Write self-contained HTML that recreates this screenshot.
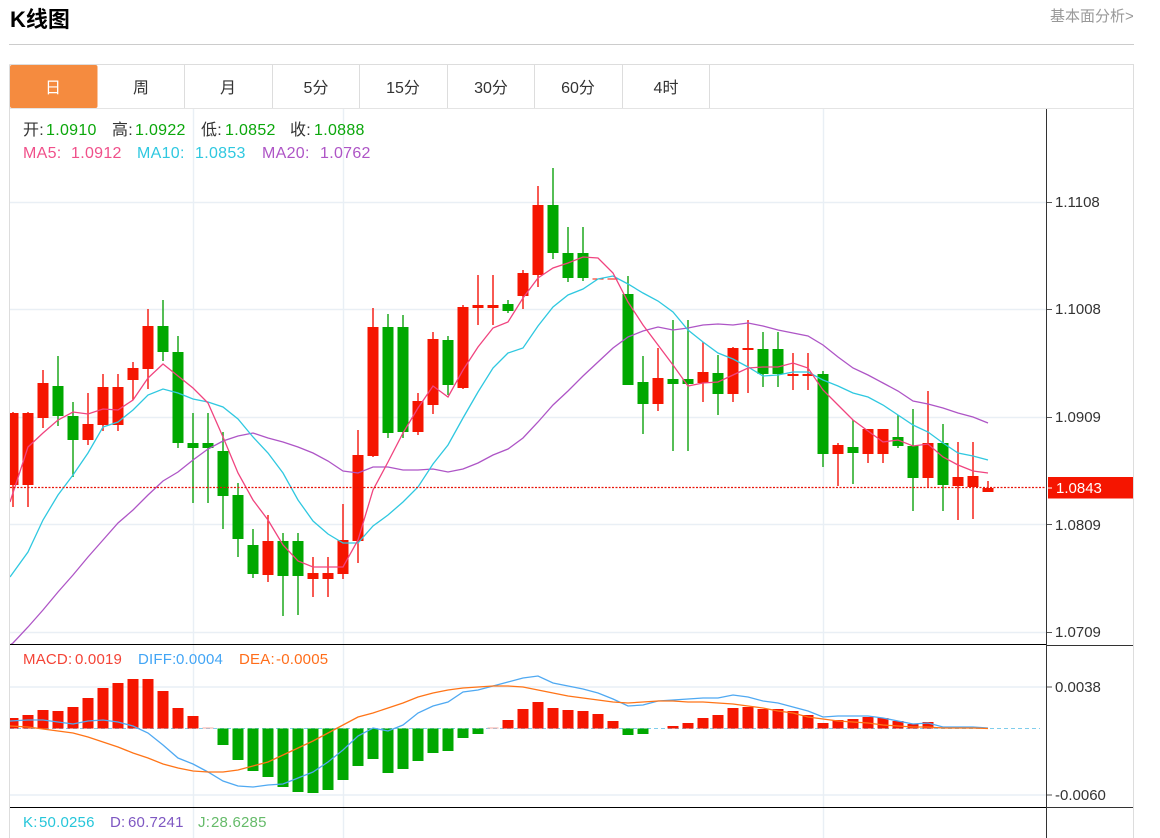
<!DOCTYPE html>
<html lang="zh">
<head>
<meta charset="utf-8">
<title>K线图</title>
<style>
html,body{margin:0;padding:0;background:#fff;width:1160px;height:838px;overflow:hidden}
svg{display:block;position:absolute;left:0;top:0}
text{font-family:"Liberation Sans","Noto Sans CJK SC",sans-serif}
.ax{font-size:15px;fill:#333}
.tab{font-size:16px;fill:#333;text-anchor:middle}
.t1{font-size:16px;letter-spacing:.3px}
.t2{font-size:15px;letter-spacing:.2px}
</style>
</head>
<body>
<svg width="1160" height="838" viewBox="0 0 1160 838" xmlns="http://www.w3.org/2000/svg">
<defs><clipPath id="c"><rect x="10" y="109" width="1036" height="535"/></clipPath></defs>
<rect width="1160" height="838" fill="#fff"/>

<text x="10" y="27" font-size="22" font-weight="700" fill="#000">K线图</text>
<text x="1050" y="21" font-size="15" fill="#999">基本面分析&gt;</text>
<path d="M9 44.5H1134" stroke="#ccc" fill="none"/>

<!-- tabs -->
<path d="M9.5 64.5H1133.5V838M9.5 64.5V838" stroke="#ddd" fill="none"/>
<path d="M10 108.5H1133.5" stroke="#e4e4e4" fill="none"/>
<path d="M184.5 65V108M272.5 65V108M359.5 65V108M447.5 65V108M534.5 65V108M622.5 65V108M709.5 65V108" stroke="#ddd" fill="none"/>
<rect x="10" y="65" width="87.5" height="43" rx="2" fill="#f58b3f"/>
<text class="tab" x="53" y="93" style="fill:#fff">日</text>
<text class="tab" x="141" y="93">周</text>
<text class="tab" x="228" y="93">月</text>
<text class="tab" x="316" y="93">5分</text>
<text class="tab" x="403" y="93">15分</text>
<text class="tab" x="491" y="93">30分</text>
<text class="tab" x="578" y="93">60分</text>
<text class="tab" x="666" y="93">4时</text>

<!-- grid -->
<path d="M10 202.5H1046M10 309.5H1046M10 417.5H1046M10 524.5H1046M10 632.5H1046M10 687H1046M10 795H1046M193.5 109V838M343.5 109V838M823.5 109V838" stroke="#e9eff5" stroke-width="1.4" fill="none"/>

<!-- candles -->
<g clip-path="url(#c)">
<path fill="none" stroke="#f5241a" stroke-width="1.5" d="M13 412V507M28 412V507M43 370V428M88 393V445M103 374V431M118 374V431M133 362V400M148 309V389M268 515V582M313 557V597M328 557V597M343 504V579M358 430V563M373 308V457M418 393V435M433 332V414M463 305V389M478 275V325M493 275V325M523 270V309M538 186V287M658 348V411M703 342V402M733 347V402M748 320V393M793 353V390M808 353V390M838 443V486M868 429V463M883 429V463M928 391V487M958 442V520M973 442V519M988 481V492"/>
<path fill="none" stroke="#1fa81f" stroke-width="1.5" d="M58 356V426M73 402V477M163 300V361M178 336V448M193 413V503M208 413V503M223 432V529M238 483V557M253 529V578M283 533V616M298 533V615M388 314V438M403 315V438M448 336V395M508 300V313M553 168V259M568 227V282M583 227V281M628 276V385M643 356V434M673 320V451M688 320V451M718 355V415M763 332V387M778 332V387M823 371V467M853 420V484M898 415V448M913 409V511M943 424V511"/>
<path fill="#f51500" d="M7.5 413h11V485h-11zM22.5 413h11V485h-11zM37.5 383h11V418h-11zM82.5 424h11V440h-11zM97.5 387h11V425h-11zM112.5 387h11V425h-11zM127.5 368h11V380h-11zM142.5 326h11V369h-11zM262.5 541h11V575h-11zM307.5 573h11V579h-11zM322.5 573h11V579h-11zM337.5 540h11V574h-11zM352.5 455h11V541h-11zM367.5 327h11V456h-11zM412.5 401h11V432h-11zM427.5 339h11V405h-11zM457.5 307h11V388h-11zM472.5 305h11V308h-11zM487.5 305h11V308h-11zM517.5 273h11V296h-11zM532.5 205h11V275h-11zM592.5 278.5h11V279.5h-11zM607.5 278.5h11V279.5h-11zM652.5 378h11V404h-11zM697.5 372h11V383h-11zM727.5 348h11V394h-11zM742.5 348h11V350h-11zM787.5 374h11V376h-11zM802.5 374h11V376h-11zM832.5 445h11V454h-11zM862.5 429h11V454h-11zM877.5 429h11V454h-11zM922.5 443h11V478h-11zM952.5 477h11V486h-11zM967.5 476h11V487h-11zM982.5 488h11V492h-11z"/>
<path fill="#00a800" d="M52.5 386h11V416h-11zM67.5 416h11V440h-11zM157.5 326h11V352h-11zM172.5 352h11V443h-11zM187.5 443h11V448h-11zM202.5 443h11V448h-11zM217.5 451h11V496h-11zM232.5 495h11V539h-11zM247.5 545h11V574h-11zM277.5 541h11V576h-11zM292.5 541h11V576h-11zM382.5 327h11V433h-11zM397.5 327h11V432h-11zM442.5 340h11V385h-11zM502.5 304h11V311h-11zM547.5 205h11V253h-11zM562.5 253h11V278h-11zM577.5 253h11V278h-11zM622.5 294h11V385h-11zM637.5 382h11V404h-11zM667.5 379h11V384h-11zM682.5 379h11V384h-11zM712.5 373h11V394h-11zM757.5 349h11V374h-11zM772.5 349h11V374h-11zM817.5 374h11V454h-11zM847.5 447h11V453h-11zM892.5 437h11V446h-11zM907.5 446h11V478h-11zM937.5 443h11V485h-11z"/>

<!-- MA20 -->
<path fill="none" stroke="#ae55c6" stroke-width="1.3" d="M10 645L13 643L28 627L43 610L58 592L73 575L88 557L103 540L118 523L133 510L148 495L163 481L178 472L193 460L208 449L223 441L238 436L253 433L268 438L283 442L298 447L313 453L328 461L343 471L358 473L373 467L388 467L403 470L418 470L433 469L448 472L463 469L478 463L493 455L508 449L523 438L538 422L553 405L568 391L583 376L598 362L613 348L628 337L643 331L658 327L673 330L688 328L703 325L718 324L733 325L748 323L763 326L778 330L793 333L808 336L823 345L838 357L853 368L868 375L883 383L898 391L913 401L928 404L943 408L958 413L973 417L988 423"/>
<!-- MA10 -->
<path fill="none" stroke="#2fc8e0" stroke-width="1.3" d="M10 577L28 552L43 520L58 495L73 475L88 453L103 427L118 422L133 410L148 395L163 389L178 393L193 399L208 402L223 407L238 419L253 437L268 453L283 473L298 500L313 521L328 534L343 543L358 543L373 526L388 515L403 502L418 487L433 464L448 445L463 418L478 392L493 368L508 353L523 348L538 326L553 307L568 295L583 289L598 279L613 276L628 284L643 293L658 301L673 312L688 330L703 342L718 353L733 359L748 367L763 376L778 375L793 372L808 372L823 380L838 386L853 393L868 397L883 405L898 415L913 425L928 432L943 443L958 453L973 456L988 460"/>
<!-- MA5 -->
<path fill="none" stroke="#f0447f" stroke-width="1.3" d="M10 502L28 447L43 433L58 420L73 412L88 414L103 409L118 410L133 400L148 378L163 364L178 376L193 388L208 403L223 437L238 473L253 500L268 520L283 545L298 561L313 567L328 567L343 567L358 540L373 490L388 462L403 433L418 408L433 386L448 397L463 370L478 347L493 328L508 322L523 298L538 278L553 268L568 263L583 257L598 258L613 273L628 302L643 325L658 345L673 365L688 386L703 383L718 382L733 375L748 368L763 367L778 367L793 363L808 368L823 390L838 405L853 420L868 431L883 442L898 440L913 446L928 444L943 457L958 465L973 471L988 473"/>
</g>
<path d="M10 487.5H1046" stroke="#e8150a" stroke-width="1.2" stroke-dasharray="2 1.5" fill="none"/>

<!-- MACD -->
<path d="M10 728.5H1040" stroke="#7fcdec" stroke-dasharray="4 3" fill="none"/>
<path fill="#f51500" d="M10 718h8.5V728.5H10zM22.5 715h11V728.5h-11zM37.5 710h11V728.5h-11zM52.5 711h11V728.5h-11zM67.5 707h11V728.5h-11zM82.5 698h11V728.5h-11zM97.5 688h11V728.5h-11zM112.5 683h11V728.5h-11zM127.5 679h11V728.5h-11zM142.5 679h11V728.5h-11zM157.5 691h11V728.5h-11zM172.5 708h11V728.5h-11zM187.5 716h11V728.5h-11zM502.5 720h11V728.5h-11zM517.5 709h11V728.5h-11zM532.5 702h11V728.5h-11zM547.5 708h11V728.5h-11zM562.5 710h11V728.5h-11zM577.5 711h11V728.5h-11zM592.5 714h11V728.5h-11zM607.5 721h11V728.5h-11zM667.5 726h11V728.5h-11zM682.5 723h11V728.5h-11zM697.5 718h11V728.5h-11zM712.5 715h11V728.5h-11zM727.5 708h11V728.5h-11zM742.5 707h11V728.5h-11zM757.5 709h11V728.5h-11zM772.5 709h11V728.5h-11zM787.5 711h11V728.5h-11zM802.5 715h11V728.5h-11zM817.5 723h11V728.5h-11zM832.5 720h11V728.5h-11zM847.5 719h11V728.5h-11zM862.5 717h11V728.5h-11zM877.5 718h11V728.5h-11zM892.5 721h11V728.5h-11zM907.5 724h11V728.5h-11zM922.5 722h11V728.5h-11z"/>
<path fill="#f7a8a0" d="M202.5 727.5h11v1h-11zM487.5 727.5h11v1h-11zM937.5 727h11v1.5h-11zM952.5 726.5h11v2h-11zM967.5 727h11v1.5h-11z"/>
<path fill="#00a800" d="M217.5 728.5h11V745h-11zM232.5 728.5h11V760h-11zM247.5 728.5h11V771h-11zM262.5 728.5h11V777h-11zM277.5 728.5h11V787h-11zM292.5 728.5h11V792h-11zM307.5 728.5h11V793h-11zM322.5 728.5h11V790h-11zM337.5 728.5h11V780h-11zM352.5 728.5h11V766h-11zM367.5 728.5h11V759h-11zM382.5 728.5h11V773h-11zM397.5 728.5h11V769h-11zM412.5 728.5h11V761h-11zM427.5 728.5h11V753h-11zM442.5 728.5h11V751h-11zM457.5 728.5h11V738h-11zM472.5 728.5h11V734h-11zM622.5 728.5h11V735h-11zM637.5 728.5h11V734h-11z"/>
<path fill="none" stroke="#4fa9f2" stroke-width="1.3" d="M10 721L28 720L43 720L58 722L73 724L88 721L103 720L118 722L133 726L148 733L163 745L178 758L193 764L208 772L223 781L238 786L253 787L268 785L283 784L298 778L313 772L328 762L343 750L358 736L373 728L388 731L403 725L418 713L433 706L448 702L463 692L478 690L493 686L508 682L523 678L538 676L553 683L568 686L583 689L598 693L613 699L628 706L643 705L658 701L673 700L688 699L703 698L718 698L733 695L748 697L763 701L778 703L793 707L808 711L823 717L838 716L853 716L868 716L883 718L898 721L913 724L928 723L943 727L958 727L973 727L988 728"/>
<path fill="none" stroke="#ff7417" stroke-width="1.3" d="M10 726L28 727L43 729L58 731L73 733L88 737L103 742L118 747L133 753L148 758L163 764L178 768L193 771L208 772L223 772L238 770L253 766L268 762L283 755L298 748L313 741L328 733L343 725L358 717L373 713L388 708L403 703L418 697L433 693L448 690L463 688L478 687L493 686L508 686L523 687L538 690L553 693L568 696L583 698L598 700L613 702L628 703L643 702L658 701L673 701L688 702L703 702L718 703L733 704L748 706L763 708L778 711L793 713L808 717L823 719L838 721L853 722L868 723L883 725L898 726L913 727L928 727L943 728L958 728L973 728L988 728.5"/>

<!-- panes + axis -->
<path d="M10 644.5H1046M10 807.5H1046" stroke="#000" fill="none"/>
<path d="M1046 645.5H1133M1046 807.5H1133" stroke="#333" fill="none"/>
<path d="M1046.5 109V838" stroke="#333" fill="none"/>
<path d="M1047 202.5h5M1047 309.5h5M1047 417.5h5M1047 524.5h5M1047 632.5h5M1047 687h5M1047 795h5" stroke="#555" fill="none"/>
<text class="ax" x="1055" y="207">1.1108</text>
<text class="ax" x="1055" y="314">1.1008</text>
<text class="ax" x="1055" y="422">1.0909</text>
<text class="ax" x="1055" y="530">1.0809</text>
<text class="ax" x="1055" y="637">1.0709</text>
<text class="ax" x="1055" y="692">0.0038</text>
<text class="ax" x="1055" y="800">-0.0060</text>
<rect x="1048" y="477" width="85" height="21.5" fill="#f51500"/>
<path d="M1047 488h5" stroke="#fff" fill="none"/>
<text class="ax" x="1056" y="493" style="fill:#fff">1.0843</text>

<!-- legends -->
<g class="t1">
<text x="23" y="135" fill="#333">开:</text><text x="46" y="135" fill="#0ba70b">1.0910</text>
<text x="112" y="135" fill="#333">高:</text><text x="135" y="135" fill="#0ba70b">1.0922</text>
<text x="201" y="135" fill="#333">低:</text><text x="225" y="135" fill="#0ba70b">1.0852</text>
<text x="290" y="135" fill="#333">收:</text><text x="314" y="135" fill="#0ba70b">1.0888</text>
<text x="23" y="158" fill="#f0508a">MA5:</text><text x="71" y="158" fill="#f0508a">1.0912</text>
<text x="137" y="158" fill="#2fc8e0">MA10:</text><text x="195" y="158" fill="#2fc8e0">1.0853</text>
<text x="262" y="158" fill="#ae55c6">MA20:</text><text x="320" y="158" fill="#ae55c6">1.0762</text>
</g>
<g class="t2">
<text x="23" y="664" fill="#f44336">MACD:</text><text x="75" y="664" fill="#f44336">0.0019</text>
<text x="138" y="664" fill="#42a5f5">DIFF:</text><text x="176" y="664" fill="#42a5f5">0.0004</text>
<text x="239" y="664" fill="#ff6d1a">DEA:</text><text x="276" y="664" fill="#ff6d1a">-0.0005</text>
<text x="23" y="827" fill="#26c6da">K:</text><text x="39" y="827" fill="#26c6da">50.0256</text>
<text x="110" y="827" fill="#7e57c2">D:</text><text x="128" y="827" fill="#7e57c2">60.7241</text>
<text x="198" y="827" fill="#66bb6a">J:</text><text x="211" y="827" fill="#66bb6a">28.6285</text>
</g>
</svg>
</body>
</html>
